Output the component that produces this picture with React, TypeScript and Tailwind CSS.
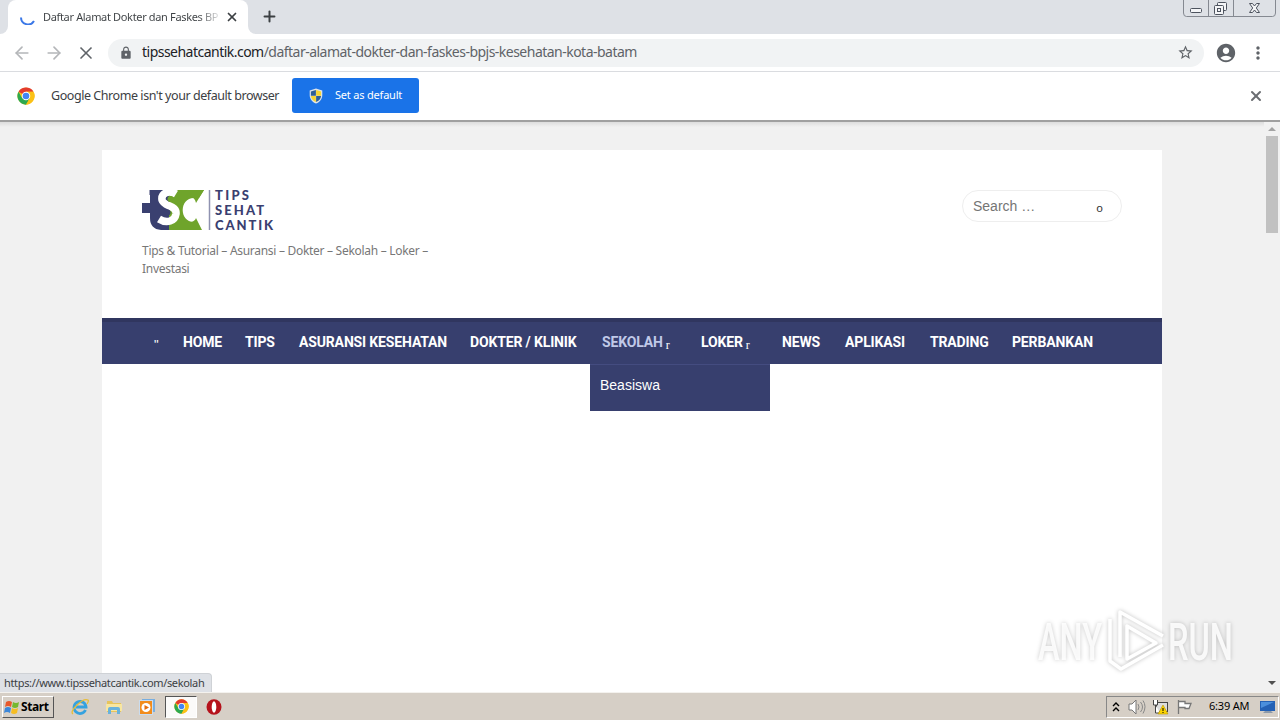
import { ArrowLeft, ArrowRight, Plus, X } from 'lucide-react'
import { MdAccountCircle, MdLock, MdMoreVert, MdStarBorder } from 'react-icons/md'

const menu = [
  { label: 'HOME', width: 'w-[62px]' },
  { label: 'TIPS', width: 'w-[54px]' },
  { label: 'ASURANSI KESEHATAN', width: 'w-[171px]' },
  { label: 'DOKTER / KLINIK', width: 'w-[132px]' },
  { label: 'SEKOLAH', width: 'w-[99px]', arrow: true, active: true },
  { label: 'LOKER', width: 'w-[81px]', arrow: true },
  { label: 'NEWS', width: 'w-[63px]' },
  { label: 'APLIKASI', width: 'w-[85px]' },
  { label: 'TRADING', width: 'w-[82px]' },
  { label: 'PERBANKAN', width: 'w-[104px]' },
]

function ChromeLogo({ size }: { size: number }) {
  return (
    <svg width={size} height={size} viewBox="0 0 48 48">
      <circle cx="24" cy="24" r="23" fill="#fbc116" />
      <path d="M24 24 4.1 12.5A23 23 0 0 1 43.9 12.5H24Z" fill="#e33b2e" />
      <path d="M4.1 12.5A23 23 0 0 0 24 47L34 29.8 24 24 14 29.8Z" fill="#2da94f" />
      <path d="M24 12.5h19.9A23 23 0 0 1 24 47l10-17.2Z" fill="#fbc116" />
      <circle cx="24" cy="24" r="11.3" fill="#fff" />
      <circle cx="24" cy="24" r="8.8" fill="#4285f4" />
    </svg>
  )
}

function Shield() {
  return (
    <svg width="14" height="16" viewBox="0 0 14 16">
      <path d="M7 .5 13.3 2.6V7c0 4-2.5 7-6.3 8.6C3.2 14 .7 11 .7 7V2.6Z" fill="#dde4ea" />
      <path d="M6.9 1.9V7.7H1.9V3.5Z" fill="#2f5f96" />
      <path d="M7.1 1.9V7.7h5v-4.2Z" fill="#f7d532" />
      <path d="M6.9 7.9v6.2c-2.8-1.3-4.6-3.3-5-6.2Z" fill="#f7d532" />
      <path d="M7.1 7.9v6.2c2.8-1.3 4.6-3.3 5-6.2Z" fill="#2f5f96" />
    </svg>
  )
}

function WindowButtons() {
  return (
    <svg width="93" height="17" viewBox="0 0 93 17" fill="none">
      <path d="M.5 0v13q0 3.5 3 3.5h86q3 0 3-3.5V0M25.5 0v16M50.5 0v16" stroke="#858991" />
      <g stroke="#4d535e" fill="#f4f5f7">
        <rect x="7.5" y="8.5" width="11" height="4" rx="1" />
        <rect x="34.5" y="2.5" width="9" height="8" rx="1" />
        <rect x="31.5" y="5.5" width="9" height="9" rx="1" />
        <rect x="34.5" y="8.5" width="3" height="3" />
        <path d="M66.5 3.5h3l2 2.5 2-2.5h3L73.3 8l3.2 4.5h-3l-2-2.5-2 2.5h-3L69.7 8Z" />
      </g>
    </svg>
  )
}

function TabStrip() {
  return (
    <div className="flex h-[34px] bg-[#dee1e6]">
      <div className="flex h-full w-2 bg-white">
        <div className="w-full rounded-br-lg bg-[#dee1e6]" />
      </div>
      <div className="flex h-full w-60 items-center rounded-t-lg bg-white pl-3">
        <svg width="16" height="16" viewBox="0 0 16 16" fill="none" className="shrink-0">
          <path d="M1 8.5A7 7 0 0 0 14 12" stroke="#3b78e7" strokeWidth="2" />
        </svg>
        <span className="ml-[7px] w-[176px] bg-linear-to-r from-[#3c4043] from-88% to-[#3c4043]/15 bg-clip-text text-[11px] tracking-[-0.34px] whitespace-nowrap text-transparent">
          Daftar Alamat Dokter dan Faskes BP
        </span>
        <X size={14} strokeWidth={3} className="ml-[6px] text-[#3c4043]" />
      </div>
      <div className="flex h-full w-2 bg-white">
        <div className="w-full rounded-bl-lg bg-[#dee1e6]" />
      </div>
      <Plus size={17} strokeWidth={2.8} className="mt-2 ml-[5px] text-[#3c4043]" />
      <div className="mr-[4px] ml-auto">
        <WindowButtons />
      </div>
    </div>
  )
}

function Toolbar() {
  return (
    <div className="flex h-[38px] items-center border-b border-[#dadce0] bg-white pl-3">
      <ArrowLeft size={20} className="text-[#b4b6b9]" />
      <ArrowRight size={20} className="ml-3 text-[#b4b6b9]" />
      <X size={20} className="ml-3 text-[#5f6368]" />
      <div className="ml-3 flex h-7 w-[1096px] items-center rounded-full bg-[#f1f3f4] pr-[10px] pl-[11px]">
        <MdLock size={14} className="text-[#5f6368]" />
        <span className="ml-[9px] pb-[2px] text-[14px] tracking-[-0.52px] whitespace-nowrap text-[#5f6368]">
          <span className="text-[#202124]">tipssehatcantik.com</span>
          /daftar-alamat-dokter-dan-faskes-bpjs-kesehatan-kota-batam
        </span>
        <MdStarBorder size={17} className="ml-auto text-[#5f6368]" />
      </div>
      <MdAccountCircle size={22} className="ml-[11px] text-[#5f6368]" />
      <MdMoreVert size={20} className="ml-[11px] text-[#5f6368]" />
    </div>
  )
}

function DefaultBrowserBar() {
  return (
    <div className="flex h-[50px] items-center border-b-2 border-b-[#a0a0a0] bg-white pr-4 pb-px pl-[17px]">
      <ChromeLogo size={18} />
      <span className="ml-4 w-[229px] pt-px text-[12.5px] tracking-[-0.44px] whitespace-nowrap text-[#3c4043]">
        Google Chrome isn't your default browser
      </span>
      <button className="ml-3 flex h-[35px] w-[127px] items-center rounded-[3px] bg-[#1a73e8] pl-[17px] text-[11px] text-white">
        <Shield />
        <span className="ml-3 tracking-[-0.2px] whitespace-nowrap">Set as default</span>
      </button>
      <X size={16} strokeWidth={3} className="ml-auto text-[#6a6d71]" />
    </div>
  )
}

function SiteLogo() {
  return (
    <svg width="140" height="42" viewBox="0 0 140 42">
      <path d="M3 1h26v40H19Q8 40 8 29V24H0V14h8V6H3Z" fill="#3a4070" />
      <path d="M0 0h7.500v14H0Z" fill="#fff" />
      <path d="M27 1h35l-7 11q-7-2-7 9t7 10l3 10H27Z" fill="#6fa42b" />
      <path d="M34 5C26 0 19 5 20 11c2 7 15 5 14 14-1 7-9 10-17 5" fill="none" stroke="#fff" strokeWidth="7.500" />
      <circle cx="28.5" cy="10" r="3" fill="#6fa42b" />
      <circle cx="25.5" cy="23.5" r="3" fill="#3a4070" />
      <path d="M64 9H52c-15 0-15 24 0 24h12L55 24V15Z" fill="#fff" />
      <path d="M49 1h13l-8 13q-1-5-5-6ZM49 41v-8q4-1 5-4l6 12Z" fill="#6fa42b" />
      <path d="M67.5 1v40" stroke="#8f92b0" strokeWidth="1.5" />
      <g fill="#3a4070" fontFamily="Lato, sans-serif" fontWeight="900" fontSize="13">
        <text x="73" y="11" textLength="34">TIPS</text>
        <text x="73" y="26" textLength="49">SEHAT</text>
        <text x="73" y="41" textLength="58">CANTIK</text>
      </g>
    </svg>
  )
}

function SiteHeader() {
  return (
    <header className="flex h-[168px] justify-between px-10 pt-[39px]">
      <div>
        <SiteLogo />
        <p className="mt-[11px] w-[310px] font-['Noto_Sans',sans-serif] text-[12px] leading-[18px] tracking-[-0.29px] text-[#777]">
          Tips &amp; Tutorial – Asuransi – Dokter – Sekolah – Loker –<br />
          Investasi
        </p>
      </div>
      <div className="mt-px flex h-8 w-40 items-center justify-between rounded-full border border-[#eee] pr-[18px] pl-[10px] font-['Liberation_Sans',sans-serif] text-[14px] text-[#757575]">
        <span>Search …</span>
        <span className="mt-1 font-['Noto_Sans',sans-serif] text-[11px] text-[#333]">o</span>
      </div>
    </header>
  )
}

function SiteNav() {
  return (
    <nav className="relative flex h-[46px] items-center border-t-4 border-[#30365f] bg-[#373f6e] pl-[52px] font-['Roboto',sans-serif] text-[14px] font-bold text-white">
      <span className="w-[29px] pt-[3px] font-['Liberation_Sans',sans-serif] text-[13px] font-normal">"</span>
      {menu.map((m) => (
        <a
          key={m.label}
          className={`${m.width} shrink-0 pb-px tracking-[-0.15px] whitespace-nowrap ${m.active ? 'text-[#c0c9e8]' : ''}`}
        >
          {m.label}
          {m.arrow && (
            <span className="relative top-[2px] ml-[3px] font-['Liberation_Serif',serif] text-[12px] font-normal text-white">
              r
            </span>
          )}
        </a>
      ))}
      <div className="absolute top-[42px] left-[488px] h-[47px] w-[180px] border-t border-[#444c80] bg-[#373f6e] px-[10px] pt-[10px] font-['Liberation_Sans',sans-serif] text-[14px] leading-5 font-normal">
        Beasiswa
      </div>
    </nav>
  )
}

function Watermark() {
  return (
    <svg
      width="206"
      height="70"
      viewBox="0 0 206 70"
      className="absolute top-[485px] left-[1032px] drop-shadow-[0_0_2px_rgba(0,0,0,0.25)]"
    >
      <g fill="#fff" fillOpacity=".85" fontFamily="Roboto, sans-serif" fontWeight="500" fontSize="51">
        <text x="6" y="53" textLength="64" lengthAdjust="spacingAndGlyphs">ANY</text>
        <text x="136" y="53" textLength="65" lengthAdjust="spacingAndGlyphs">RUN</text>
      </g>
      <g fill="none" stroke="#fff" strokeWidth="3.5" strokeLinejoin="round">
        <path d="M88 50V5l43 24M78 12v42l11 8 42-24M95 19v33l29-16Z" />
      </g>
    </svg>
  )
}

function Scrollbar() {
  return (
    <div className="flex h-full w-4 flex-col items-center bg-[#f1f1f1]">
      <svg width="16" height="14" viewBox="0 0 16 14">
        <path d="m4 9 4-4 4 4Z" fill="#a3a3a3" />
      </svg>
      <div className="h-[97px] w-3 bg-[#c1c1c1]" />
      <svg width="16" height="16" viewBox="0 0 16 16" className="mt-auto">
        <path d="m4 5 4 4 4-4Z" fill="#505050" />
      </svg>
    </div>
  )
}

function Page() {
  return (
    <main className="relative flex h-[570px] overflow-hidden bg-[#f1f1f1]">
      <div className="h-[5px] w-[102px] shrink-0 bg-linear-to-b from-[#ddd] to-[#f1f1f1]" />
      <div className="w-[1060px] shrink-0">
        <div className="h-7 bg-linear-to-b from-[#ddd] to-[#f1f1f1] to-18%" />
        <div className="h-full bg-white">
          <SiteHeader />
          <SiteNav />
        </div>
      </div>
      <div className="h-[5px] grow bg-linear-to-b from-[#ddd] to-[#f1f1f1]" />
      <Scrollbar />
      <Watermark />
      <div className="absolute bottom-0 left-0 h-[19px] w-[212px] rounded-tr border-t border-r border-[#cfd2d6] bg-[#dee1e6] pl-1 text-[11px] leading-[18px] tracking-[-0.34px] whitespace-nowrap text-[#3c4043]">
        https://www.tipssehatcantik.com/sekolah
      </div>
    </main>
  )
}

function Taskbar() {
  return (
    <footer className="flex h-7 items-center border-t border-[#f4f2ee] bg-[#d6cfc6] text-black">
      <button className="ml-[2px] flex h-[22px] w-[52px] items-center border border-t-white border-r-[#555] border-b-[#555] border-l-white pl-px text-[12px] font-bold tracking-[-0.4px]">
        <svg width="16" height="16" viewBox="0 0 16 16" className="mr-px shrink-0">
          <path d="M2 3q3-2 6 0L7 8Q4 6 1 8Z" fill="#e8592b" />
          <path d="M9 3q3 2 6 0l-1 5q-3 2-6 0Z" fill="#76b82f" />
          <path d="M1 9q3-2 6 0l-1 5q-3-2-6 0Z" fill="#3c87d9" />
          <path d="M8 9q3 2 6 0l-1 5q-3 2-6 0Z" fill="#f6bd22" />
        </svg>
        Start
      </button>
      <svg width="18" height="18" viewBox="0 0 18 18" fill="none" className="ml-[17px]">
        <path d="M14.5 12a6 6 0 1 1 .5-3H5" stroke="#35a2df" strokeWidth="2.8" />
        <path d="M2 16Q-1 14 6 7t11-5q1 1-1 4" stroke="#e8bd36" strokeWidth="1.3" />
      </svg>
      <svg width="18" height="18" viewBox="0 0 18 18" className="ml-4">
        <path d="M2 3h5l1 2h8v9H2Z" fill="#e7c45b" />
        <path d="M1 6h16v7H1Z" fill="#f8e6a0" />
        <path d="M3 16v-5q0-2 2-2h8q2 0 2 2v5h-3v-4H6v4Z" fill="#69b2dc" />
      </svg>
      <svg width="18" height="18" viewBox="0 0 18 18" className="ml-[15px]">
        <rect x="4" y="1" width="13" height="13" fill="#78aee0" />
        <rect x="1.5" y="2.5" width="13" height="14" fill="#f28c1c" stroke="#c9dcef" />
        <circle cx="8" cy="9.5" r="4.5" fill="#fff" />
        <path d="m6.5 7 4.5 2.5L6.5 12Z" fill="#e56d0c" />
      </svg>
      <div className="ml-[9px] flex h-[22px] w-[32px] items-center justify-center border border-t-[#555] border-r-white border-b-white border-l-[#555] bg-[#fbfaf9]">
        <ChromeLogo size={15} />
      </div>
      <svg width="16" height="16" viewBox="0 0 16 16" className="ml-[9px]">
        <ellipse cx="8" cy="8" rx="7.5" ry="7.8" fill="#b5121b" />
        <ellipse cx="8" cy="8" rx="2.3" ry="5.8" fill="#fff" />
      </svg>
      <div className="mr-px ml-auto flex h-[22px] w-[173px] items-center border border-t-[#888] border-r-white border-b-white border-l-[#888] pl-[5px] text-[11px] tracking-[-0.2px]">
        <svg width="8" height="12" viewBox="0 0 8 12" fill="none" stroke="#000" strokeWidth="1.4">
          <path d="m1 5 3-3 3 3M1 10l3-3 3 3" />
        </svg>
        <svg width="18" height="16" viewBox="0 0 18 16" fill="none" className="ml-2">
          <path d="M1 5h3l4-4v14l-4-4H1Z" fill="#fff" stroke="#777" />
          <path d="M10 5q2 3 0 6M12.5 3q4 5 0 10M15 1.5q4 6 0 13" stroke="#888" />
        </svg>
        <svg width="17" height="16" viewBox="0 0 17 16" className="ml-[6px]">
          <rect x="4.5" y="3.5" width="11" height="9" fill="#ddd" stroke="#444" />
          <path d="M1.5 1v5h4V1M3.5 6v8H8" fill="#fff" stroke="#444" />
          <path d="m11 6 5 9H6Z" fill="#fbd400" stroke="#b89300" strokeWidth=".6" />
          <path d="M11 9v3M11 13v1" stroke="#000" />
        </svg>
        <svg width="17" height="16" viewBox="0 0 17 16" className="ml-[7px]">
          <path d="M2.5 1v14M3 2.5h6v2h6l-2 5H9v-1H3" fill="#fff" stroke="#777" strokeWidth="1.3" />
        </svg>
        <span className="ml-4 w-[42px] whitespace-nowrap">6:39 AM</span>
        <svg width="16" height="14" viewBox="0 0 16 14" className="ml-[9px] shrink-0">
          <path d="M0 1h15v10H0Z" fill="#2461b5" />
          <path d="M1 2h13L1 8Z" fill="#4b8fdc" />
          <path d="M5 11h6l2 2H3Z" fill="#8d9aaa" />
        </svg>
      </div>
    </footer>
  )
}

export default function App() {
  return (
    <div className="h-[720px] w-[1280px] overflow-hidden font-['Noto_Sans','DejaVu_Sans',sans-serif]">
      <TabStrip />
      <Toolbar />
      <DefaultBrowserBar />
      <Page />
      <Taskbar />
    </div>
  )
}
